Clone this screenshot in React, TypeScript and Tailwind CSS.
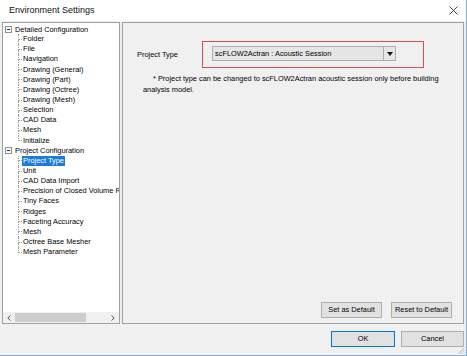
import React from "react";

const detailed = [
  "Folder",
  "File",
  "Navigation",
  "Drawing (General)",
  "Drawing (Part)",
  "Drawing (Octree)",
  "Drawing (Mesh)",
  "Selection",
  "CAD Data",
  "Mesh",
  "Initialize",
];

const project = [
  "Project Type",
  "Unit",
  "CAD Data Import",
  "Precision of Closed Volume Recognition",
  "Tiny Faces",
  "Ridges",
  "Faceting Accuracy",
  "Mesh",
  "Octree Base Mesher",
  "Mesh Parameter",
];

const RootRow = ({ label }: { label: string }) => (
  <div className="flex items-center h-[10.15px] pl-[1px]">
    <div className="shrink-0 w-[7px] h-[7px] border border-[#919191] bg-white flex items-center justify-center">
      <div className="w-[3px] h-px bg-[#333]" />
    </div>
    <span className="ml-[3px]">{label}</span>
  </div>
);

const ChildRow = ({
  label,
  last,
  selected,
}: {
  label: string;
  last?: boolean;
  selected?: boolean;
}) => (
  <div className="flex items-stretch h-[10.15px]">
    <div className="shrink-0 ml-[14px] w-[4px] flex flex-col">
      <div className="flex-1 border-l border-b border-dotted border-[#a0a0a0]" />
      <div
        className={
          last ? "flex-1" : "flex-1 border-l border-dotted border-[#a0a0a0]"
        }
      />
    </div>
    <div className="shrink-0 flex items-center">
      <span
        className={
          selected
            ? "px-[1px] leading-[10px] bg-[#1c7bd9] text-white"
            : "px-[1px] leading-[10px]"
        }
      >
        {label}
      </span>
    </div>
  </div>
);

const WinButton = ({
  label,
  className,
}: {
  label: string;
  className: string;
}) => (
  <div
    className={
      "flex items-center justify-center bg-[#e1e1e1] border text-[7.4px] text-black " +
      className
    }
  >
    {label}
  </div>
);

export default function App() {
  return (
    <div className="relative w-[467px] h-[356px] bg-[#f0f0f0] border-r border-b border-[#7eb0dc] flex flex-col font-['Liberation_Sans',Arial,sans-serif] text-black overflow-hidden">
      {/* title bar */}
      <div className="h-[21px] bg-white flex items-center justify-between pl-[9px] pr-[9px]">
        <span className="text-[9px] text-[#111]">Environment Settings</span>
        <svg width="9" height="9" viewBox="0 0 9 9" className="mr-[-1px]">
          <path d="M0.5 0.5 L8.5 8.5 M8.5 0.5 L0.5 8.5" stroke="#333" strokeWidth="0.9" />
        </svg>
      </div>

      {/* panels */}
      <div className="mt-px h-[302px] flex gap-[2px] pl-[2px] pr-[2px]">
        {/* tree */}
        <div className="w-[118px] shrink-0 bg-white border border-[#a0a0a0] flex flex-col text-[7.4px]">
          <div className="flex-1 overflow-hidden whitespace-nowrap pt-[1px] pl-[1px]">
            <RootRow label="Detailed Configuration" />
            {detailed.map((d, i) => (
              <ChildRow key={d + i} label={d} last={i === detailed.length - 1} />
            ))}
            <RootRow label="Project Configuration" />
            {project.map((d, i) => (
              <ChildRow
                key={d + i}
                label={d}
                selected={i === 0}
                last={i === project.length - 1}
              />
            ))}
          </div>
          <div className="h-[11px] bg-[#f0f0f0] flex items-stretch">
            <div className="w-[12px] flex items-center justify-center">
              <svg width="4" height="6" viewBox="0 0 4 6">
                <path d="M3.5 0.5 L0.8 3 L3.5 5.5" fill="none" stroke="#555" strokeWidth="1" />
              </svg>
            </div>
            <div className="flex-1 flex items-stretch py-[1px]">
              <div className="w-[71px] bg-[#cdcdcd]" />
            </div>
            <div className="w-[12px] flex items-center justify-center">
              <svg width="4" height="6" viewBox="0 0 4 6">
                <path d="M0.5 0.5 L3.2 3 L0.5 5.5" fill="none" stroke="#555" strokeWidth="1" />
              </svg>
            </div>
          </div>
        </div>

        {/* settings panel */}
        <div className="flex-1 border border-[#a0a0a0] flex flex-col pt-[18px] text-[7.4px]">
          <div className="flex items-center pl-[14px]">
            <span className="w-[65px]">Project Type</span>
            <div className="w-[222px] h-[27px] border border-[#e24a4f] pl-[9px] pt-[4px]">
              <div className="w-[184px] h-[15px] bg-[#e5e5e5] border border-[#adadad] flex items-stretch">
                <div className="flex-1 flex items-center pl-[2px]">
                  scFLOW2Actran : Acoustic Session
                </div>
                <div className="w-[12px] border-l border-[#adadad] flex items-center justify-center">
                  <svg width="6" height="4" viewBox="0 0 6 4">
                    <path d="M0 0 H6 L3 4 Z" fill="#111" />
                  </svg>
                </div>
              </div>
            </div>
          </div>
          <p className="mt-[5px] ml-[20px] indent-[10px] leading-[11px]">
            * Project type can be changed to scFLOW2Actran acoustic session only before building
            <br />
            analysis model.
          </p>
          <div className="mt-auto flex justify-end gap-[9px] pr-[11px] pb-[5px]">
            <WinButton label="Set as Default" className="w-[61px] h-[16px] border-[#adadad]" />
            <WinButton label="Reset to Default" className="w-[61px] h-[16px] border-[#adadad]" />
          </div>
        </div>
      </div>

      {/* bottom buttons */}
      <div className="mt-[7px] flex justify-end gap-[6px] pr-[2px]">
        <WinButton label="OK" className="w-[64px] h-[16px] border-[#0078d7]" />
        <WinButton label="Cancel" className="w-[63px] h-[16px] border-[#adadad]" />
      </div>

      {/* resize grip */}
      <svg width="8" height="8" viewBox="0 0 8 8" className="absolute right-[1px] bottom-[1px]">
        <path d="M7.5 1.5 L1.5 7.5 M7.5 4 L4 7.5 M7.5 6.5 L6.5 7.5" stroke="#a8a8a8" strokeWidth="0.8" />
      </svg>
    </div>
  );
}
